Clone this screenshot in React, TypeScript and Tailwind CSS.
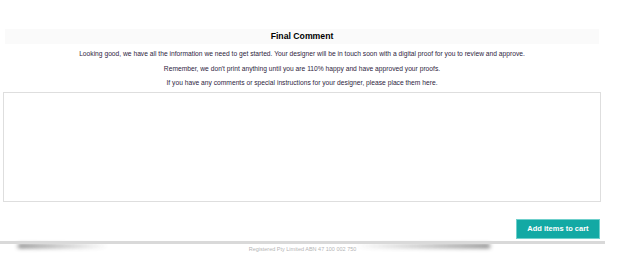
import React from "react";

export default function App() {
  const lines = [
    "Looking good, we have all the information we need to get started. Your designer will be in touch soon with a digital proof for you to review and approve.",
    "Remember, we don't print anything until you are 110% happy and have approved your proofs.",
    "If you have any comments or special instructions for your designer, please place them here.",
  ];

  return (
    <div
      className="w-[624px] h-[254px] overflow-hidden bg-white relative"
      style={{ fontFamily: '"Liberation Sans", Arial, sans-serif' }}
    >
      <div className="pt-[29px] px-[3px] w-[604px]">
        <div className="mx-[2px] h-[15px] flex items-center justify-center bg-[#fafafa]">
          <h2 className="text-[8.7px] font-bold text-black">Final Comment</h2>
        </div>
        <div className="mt-[5px] flex flex-col items-center gap-[5.5px] text-[6.7px] leading-[9px] text-[#2e2440]">
          {lines.map((l, i) => (
            <p key={i}>{l}</p>
          ))}
        </div>
        <textarea className="mt-[5px] block w-[598px] h-[110px] border border-[#dedede] bg-white resize-none outline-none" />
        <div className="mt-[17px] flex justify-end pr-[1px]">
          <button className="w-[84px] h-[20px] bg-[#13a9a4] border border-[#6fd0cc] text-white text-[7.5px] font-bold">
            Add items to cart
          </button>
        </div>
      </div>
      <div className="relative mt-[2px] w-[605px]">
        <div className="absolute left-[18px] top-[3px] w-[90px] h-[4px] bg-gradient-to-r from-[#555] to-transparent blur-[2px] opacity-80" />
        <div className="absolute left-[355px] top-[3px] w-[135px] h-[4px] bg-gradient-to-l from-[#555] to-transparent blur-[2px] opacity-80" />
        <div className="relative h-[3px] bg-[#d9d9d9]" />
      </div>
      <p className="mt-[2px] w-[605px] text-center text-[5.5px] leading-[7px] text-[#b5b5b5]">
        Registered Pty Limited ABN 47 100 002 750
      </p>
    </div>
  );
}
